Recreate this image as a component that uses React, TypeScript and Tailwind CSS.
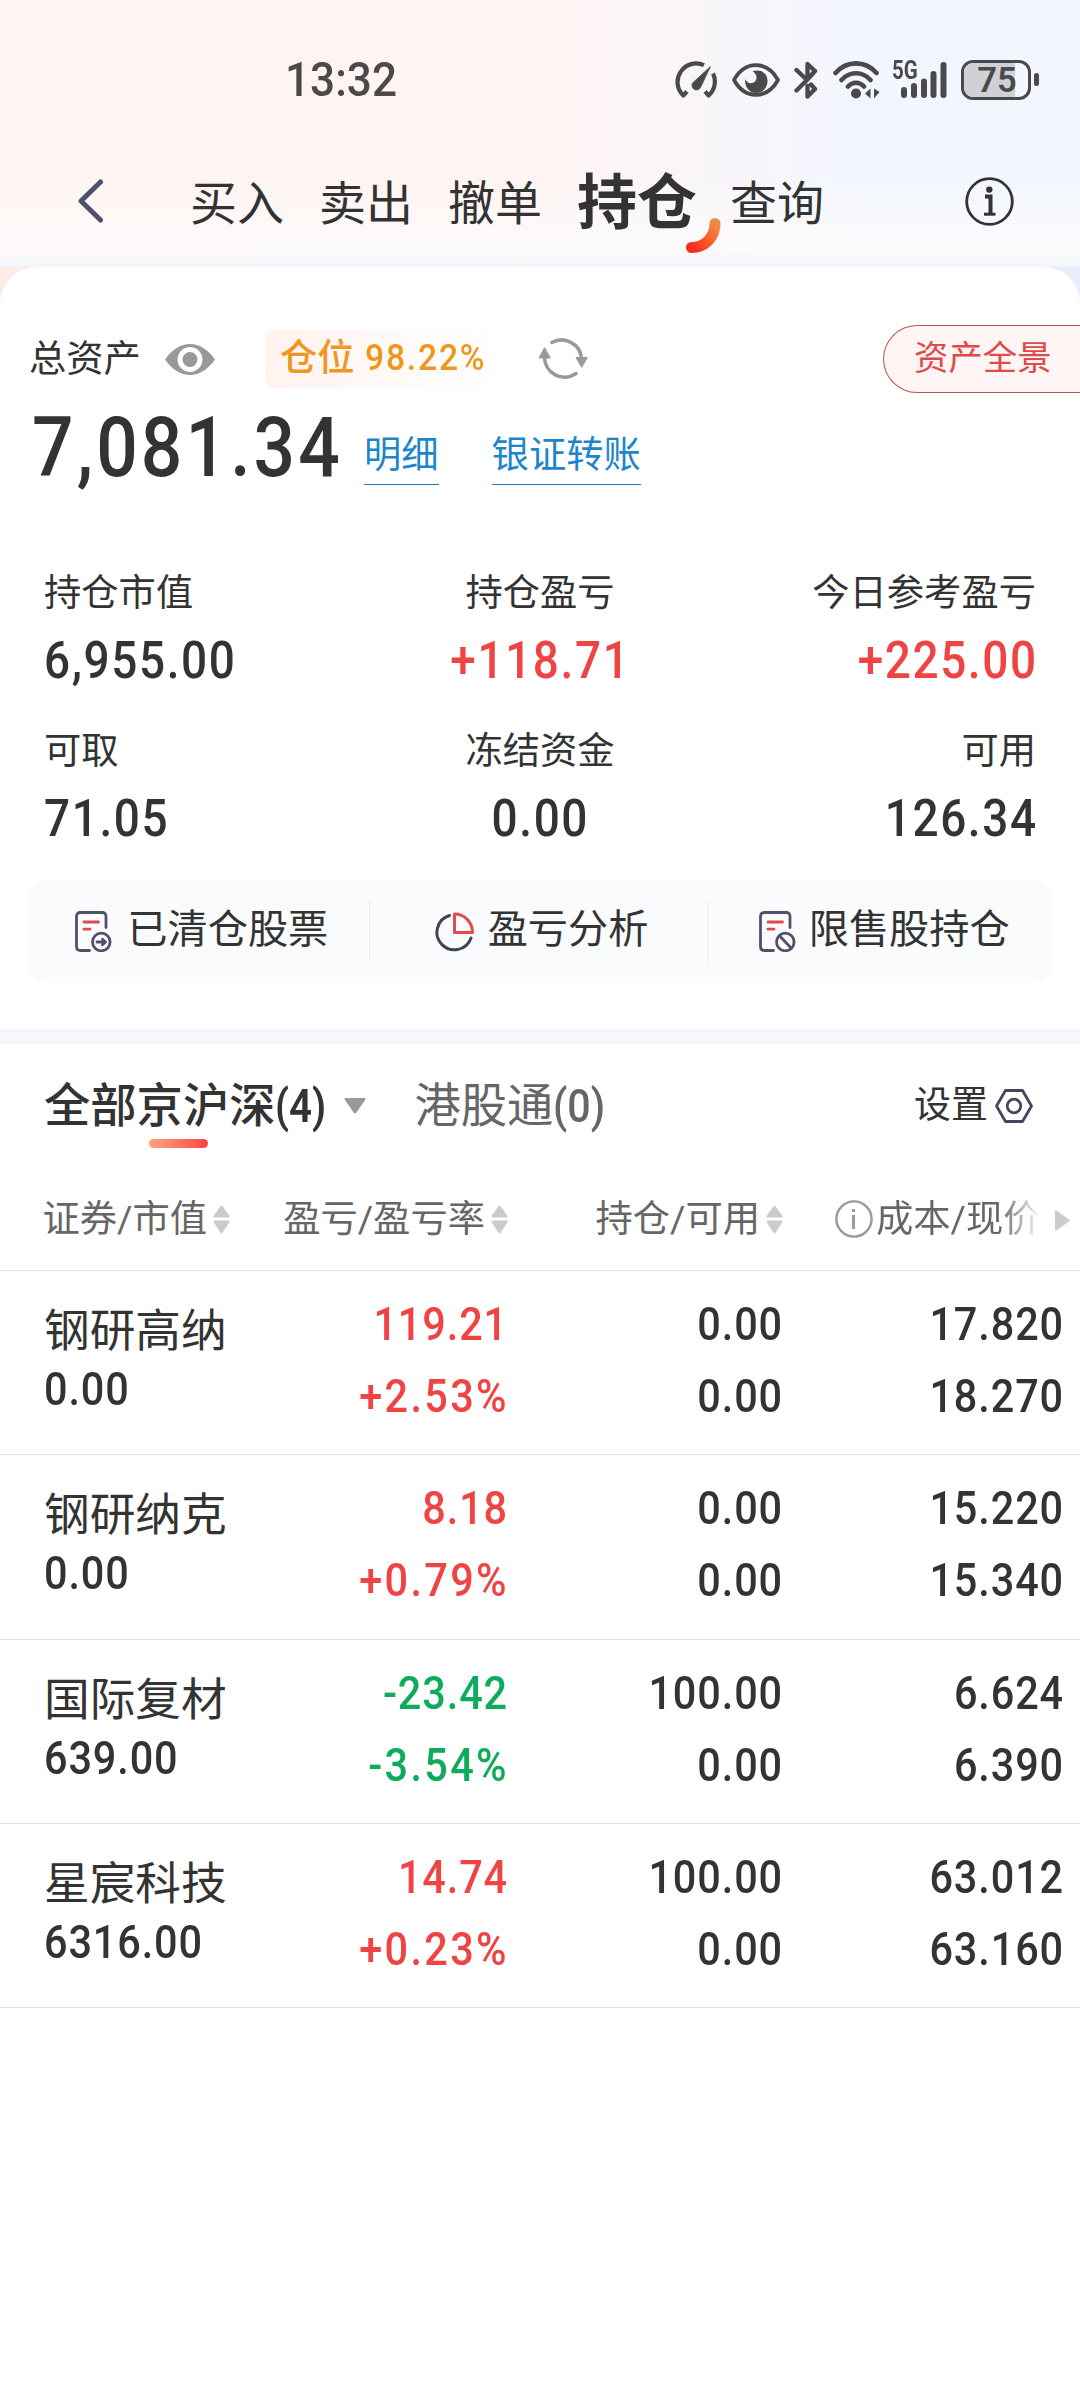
import React from "react";
import clsx from "clsx";

interface Stat {
  label: string;
  value: string;
  up?: boolean;
}

interface Holding {
  name: string;
  marketValue: string;
  profit: string;
  rate: string;
  amount: string;
  usable: string;
  cost: string;
  price: string;
}

const stats: Stat[] = [
  { label: "持仓市值", value: "6,955.00" },
  { label: "持仓盈亏", value: "+118.71", up: true },
  { label: "今日参考盈亏", value: "+225.00", up: true },
  { label: "可取", value: "71.05" },
  { label: "冻结资金", value: "0.00" },
  { label: "可用", value: "126.34" }
];

const holdings: Holding[] = [
  { name: "钢研高纳", marketValue: "0.00", profit: "119.21", rate: "+2.53%", amount: "0.00", usable: "0.00", cost: "17.820", price: "18.270" },
  { name: "钢研纳克", marketValue: "0.00", profit: "8.18", rate: "+0.79%", amount: "0.00", usable: "0.00", cost: "15.220", price: "15.340" },
  { name: "国际复材", marketValue: "639.00", profit: "-23.42", rate: "-3.54%", amount: "100.00", usable: "0.00", cost: "6.624", price: "6.390" },
  { name: "星宸科技", marketValue: "6316.00", profit: "14.74", rate: "+0.23%", amount: "100.00", usable: "0.00", cost: "63.012", price: "63.160" }
];

const StatusIcons = () => (
  <div className="flex items-center text-[#4a4a4a]">
    <svg className="w-[42px] h-[38px]" viewBox="0 0 42 38" fill="none" stroke="currentColor" strokeLinejoin="round">
      <path d="M29 4.200A18.600 18.600 0 0 0 8.300 34.500L12 30.500M38 12.500A18.600 18.600 0 0 1 33.700 34.500L30 30.500" strokeWidth="4.200" />
      <path d="M35.500 5.500L25.600 26.200A4.500 4.500 0 1 1 18.600 21Z" fill="currentColor" strokeWidth=".8" />
    </svg>
    <svg className="ml-[15px] w-[48px] h-[34px]" viewBox="0 0 48 34" fill="none">
      <path d="M2 17C7 8 15 2.200 24 2.200S41 8 46 17C41 26 33 31.800 24 31.800S7 26 2 17Z" stroke="currentColor" strokeWidth="3.800" strokeLinejoin="round" />
      <path d="M20.500 8.200C31 5.500 36 12 35.500 19C35 26 29.500 30 24 30C17 30 12.500 24 13.200 16C15 20.500 20 21.500 23 18.500C26 15 24.500 10.500 20.500 8.200Z" fill="currentColor" />
    </svg>
    <svg className="ml-[14px] w-[24px] h-[38px]" viewBox="0 0 24 38" fill="none" stroke="currentColor" strokeWidth="4.400" strokeLinecap="round" strokeLinejoin="round">
      <path d="M2.500 9L13 19L21 10L13.500 3V15M2.500 29.500L13 19M13.500 25V35.500L21 28L17 23.500" />
    </svg>
    <svg className="ml-[15px] w-[47px] h-[38px]" viewBox="0 0 47 38" fill="none" stroke="currentColor" strokeWidth="4.600" strokeLinecap="round">
      <path d="M2.500 12C14 -.8 32 -.8 43.500 12M8.500 19C16.500 10 29.500 10 37.500 19M15 25.500C19.500 20.500 26.500 20.500 31 25.500" />
      <circle cx="23" cy="32.500" r="5" fill="currentColor" stroke="none" />
      <path d="M32 32.500L37.500 27.500V37.500ZM46.500 31L41 27.500V37.500Z" fill="currentColor" stroke="none" />
    </svg>
    <div className="relative ml-[13px] w-[55px] h-[38px]">
      <span className="absolute left-[-1px] top-[-1px] text-[25px] leading-[22px] font-bold origin-left scale-x-[0.82]">5G</span>
      <svg className="w-[55px] h-[38px]" viewBox="0 0 55 38" stroke="currentColor" strokeWidth="6" strokeLinecap="round">
        <path d="M11 29V34M21 25V34M31 20.500V34M40.500 13V34M50.500 4V34" />
      </svg>
    </div>
    <div className="ml-[13px] flex items-center">
      <div className="relative w-[70px] h-[40px] rounded-[12px] border-[3px] border-[#4a4a4a] overflow-hidden">
        <div className="w-[51px] h-full bg-[#d0d1d7]" />
        <span className="absolute inset-0 pl-[2px] text-center text-[34.500px] leading-[35px] font-semibold">75</span>
      </div>
      <div className="ml-[3px] w-[5px] h-[13px] rounded-full bg-[#4a4a4a]" />
    </div>
  </div>
);

const SortIcon = () => (
  <svg className="w-[17px] h-[29px] shrink-0" viewBox="0 0 17 29" fill="#cbcbcb">
    <path d="M7.500 1.200Q8.500 0 9.500 1.200L16.500 11Q17 12.500 15.500 12.500H1.500Q0 12.500 .5 11ZM7.500 27.800Q8.500 29 9.500 27.800L16.500 17Q17 15.500 15.500 15.500H1.500Q0 15.500 .5 17Z" />
  </svg>
);

const DocIcon = ({ blocked }: { blocked?: boolean }) => (
  <svg className="w-[37px] h-[41px]" viewBox="0 0 37 41" fill="none" stroke="#50506b" strokeWidth="2.800" strokeLinecap="round" strokeLinejoin="round">
    <path d="M31 16.500V5.500Q31 1.500 27 1.500H5.500Q1.500 1.500 1.500 5.500V35.500Q1.500 39.500 5.500 39.500H14.500" />
    <path d="M9 11H23.500M9 18.200H15" stroke="#dc4a4a" />
    <circle cx="26.300" cy="31" r="8.800" />
    {blocked ? <path d="M20.500 24.800L32 37" /> : <path d="M22 31H30M27.500 28.200L30.500 31L27.500 33.800" />}
  </svg>
);

const PieIcon = () => (
  <svg className="w-[39px] h-[40px]" viewBox="0 0 39 40" fill="none" strokeWidth="3" strokeLinecap="round" strokeLinejoin="round">
    <path d="M14.500 3.500A17.500 17.500 0 1 0 36 26" stroke="#40435a" />
    <path d="M19.500 2V20.500H37.500A18 18.500 0 0 0 19.500 2Z" stroke="#e64b4b" />
  </svg>
);

const Header = () => (
  <header className="h-[267px] pt-[59px]">
    <div className="flex h-[41px] items-center justify-between pl-[285px] pr-[41px]">
      <span className="inline-block origin-left scale-x-[0.92] text-[48px] leading-[44px] font-medium text-[#4a4a4a]">13:32</span>
      <StatusIcons />
    </div>
    <div className="mt-[65px] flex h-[72px] items-center text-[47px] leading-[72px] text-[#333]">
      <svg className="ml-[77px] w-[27px] h-[44px]" viewBox="0 0 27 44" fill="none" stroke="#4e4e6e" strokeWidth="5" strokeLinecap="round" strokeLinejoin="round">
        <path d="M23.500 3L4 22L23.500 41" />
      </svg>
      <nav className="ml-[86px] mt-[6px] flex items-center gap-[35px]">
        <span>买入</span>
        <span>卖出</span>
        <span>撤单</span>
        <span className="relative text-[60px] font-bold">
          持仓
          <svg className="absolute left-[108px] top-[50px] w-[36px] h-[36px]" viewBox="0 0 36 36" fill="none">
            <defs>
              <linearGradient id="arc" x1="1" y1="0" x2="0" y2="1">
                <stop offset="0" stopColor="#f08c42" />
                <stop offset=".5" stopColor="#fb5c2c" />
                <stop offset="1" stopColor="#f82a20" />
              </linearGradient>
            </defs>
            <path d="M30 5.500C30 19 20 29.500 6.500 29.500" stroke="url(#arc)" strokeWidth="11" strokeLinecap="round" />
          </svg>
        </span>
        <span className="-ml-[2px]">查询</span>
      </nav>
      <svg className="ml-auto mr-[66px] w-[49px] h-[49px]" viewBox="0 0 49 49" fill="none" stroke="#333">
        <circle cx="24.500" cy="24.500" r="22.800" strokeWidth="2.800" />
        <circle cx="24.300" cy="12.600" r="3.200" fill="#333" stroke="none" />
        <path d="M20 19.500H25.500V37" strokeWidth="4" />
        <path d="M19 37.200H30.500" strokeWidth="3" />
      </svg>
    </div>
  </header>
);

const Summary = () => (
  <section className="h-[762px]">
    <div className="flex items-center pt-[58px] text-[37.300px] leading-[68px] text-[#333]">
      <span className="ml-[29px] -mt-[1px]">总资产</span>
      <svg className="ml-[24px] w-[50px] h-[31px]" viewBox="0 0 50 31">
        <path d="M0 15.500Q11 0 25 0T50 15.500Q39 31 25 31T0 15.500Z" fill="#999" />
        <circle cx="25" cy="15.500" r="10" fill="#999" stroke="#fff" strokeWidth="5" />
      </svg>
      <div className="ml-[50px] flex h-[58px] w-[230px] items-center rounded-lg bg-linear-to-r from-[#fff3ee] to-white pl-[15px] leading-[52px] whitespace-nowrap text-[#f0961e]">
        <span className="-mt-[3px] font-medium">仓位</span>
        <span className="-mt-[3px] ml-[11px] inline-block origin-left scale-x-[0.92] text-[36.500px] font-medium tracking-[2px]">98.22%</span>
      </div>
      <svg className="ml-[43px] -mt-[2px] w-[50px] h-[44px]" viewBox="0 0 50 44" fill="none" stroke="#999" strokeWidth="3.600" strokeLinecap="round">
        <path d="M14 6.500A20 20 0 0 1 43.500 22M38 37.500A20 20 0 0 1 6.500 21" />
        <path d="M43.500 31L38 21.500H49ZM6.500 12L1 22H12Z" fill="#999" stroke="#999" strokeWidth="1" strokeLinejoin="round" />
      </svg>
      <button className="ml-auto h-[68px] w-[197px] rounded-l-full border border-r-0 border-[#b85252] bg-[#fff5f4] pb-[2px] pl-[30px] text-left text-[34.400px] leading-[62px] text-[#e04a49]">
        资产全景
      </button>
    </div>
    <div className="flex h-[125px] pl-[32px]">
      <span className="inline-block w-[332px] origin-left scale-x-[0.87] text-[84px] leading-[109px] font-medium tracking-[3.600px] text-[#333]">7,081.34</span>
      <div className="flex items-start gap-[53px] pt-[33px] text-[37.300px] leading-[58px] text-[#1d86cb]">
        <span className="h-[59px] border-b border-[#1f78ac]">明细</span>
        <span className="h-[59px] border-b border-[#1f78ac]">银证转账</span>
      </div>
    </div>
    <div className="mb-[1px] grid grid-cols-3 px-[44px] pt-[45px] text-[#333]">
      {stats.map((s, i) => (
        <div key={s.label} className={clsx("h-[158px]", i % 3 === 1 && "text-center", i % 3 === 2 && "text-right")}>
          <div className="text-[37.300px] leading-[60px]">{s.label}</div>
          <div
            className={clsx(
              "mt-[8px] text-[51px] leading-[60px] font-medium tracking-[1.800px] scale-x-[0.9]",
              i % 3 === 0 && "origin-left",
              i % 3 === 2 && "origin-right -mr-[2px]",
              s.up && "text-[#f04343]"
            )}
          >
            {s.value}
          </div>
        </div>
      ))}
    </div>
    <div className="mx-[29px] flex h-[103px] items-center rounded-[17px] bg-[#fafbfd] text-[40.200px] leading-[60px] text-[#333]">
      <div className="flex h-[61px] flex-1 items-center justify-center gap-[15px] border-r border-[#ececf0] pl-[6px]">
        <DocIcon />
        <span className="-mt-[3px]">已清仓股票</span>
      </div>
      <div className="flex h-[61px] flex-1 items-center justify-center gap-[14px] border-r border-[#ececf0] pl-[5px]">
        <PieIcon />
        <span className="-mt-[3px]">盈亏分析</span>
      </div>
      <div className="flex h-[61px] flex-1 items-center justify-center gap-[13px] pl-[8px]">
        <DocIcon blocked />
        <span className="-mt-[3px]">限售股持仓</span>
      </div>
    </div>
  </section>
);

const Positions = () => (
  <section>
    <div className="relative flex h-[122px] items-center pt-[2px] pl-[44px] pr-[47px] text-[46.300px] leading-[60px]">
      <span className="font-medium text-[#333]">
        全部京沪深
        <span className="inline-block w-[51px] origin-left scale-x-[0.87] font-semibold">(4)</span>
      </span>
      <svg className="ml-[18px] w-[22px] h-[16px]" viewBox="0 0 22 16" fill="#999">
        <path d="M1.500 0H20.500Q22 0 21.300 1.800L12.200 14.800Q11 16 9.800 14.800L.7 1.800Q0 0 1.500 0Z" />
      </svg>
      <span className="ml-[48px] text-[#666]">
        港股通
        <span className="inline-block origin-left scale-x-[0.89] font-medium">(0)</span>
      </span>
      <span className="ml-auto text-[37px] text-[#333]">设置</span>
      <svg className="ml-[7px] w-[38px] h-[34px]" viewBox="0 0 38 34" fill="none" stroke="#45455c" strokeWidth="2.800" strokeLinejoin="round">
        <path d="M10.500 1.500H27.500L36.500 17L27.500 32.500H10.500L1.500 17Z" />
        <circle cx="19" cy="17" r="6.800" />
      </svg>
      <div className="absolute left-[149px] top-[95px] h-[9px] w-[59px] rounded-full bg-linear-to-r from-[#ffa27f] to-[#fb4040]" />
    </div>
    <div className="flex h-[105px] items-start border-b border-[#e0e0e0] pt-[24px] text-[37.300px] leading-[58px] text-[#666]">
      <div className="flex w-[230px] items-center justify-end gap-[6px]">
        证券/市值
        <SortIcon />
      </div>
      <div className="flex w-[278px] items-center justify-end gap-[6px]">
        盈亏/盈亏率
        <SortIcon />
      </div>
      <div className="flex w-[275px] items-center justify-end gap-[6px]">
        持仓/可用
        <SortIcon />
      </div>
      <div className="ml-[52px] flex w-[210px] items-center gap-[3px] whitespace-nowrap">
        <svg className="w-[38px] h-[38px] shrink-0" viewBox="0 0 38 38" fill="none" stroke="#999" strokeWidth="2.400">
          <circle cx="19" cy="19" r="17.600" />
          <path d="M18.500 15V29M18.500 9V12" strokeWidth="3" />
        </svg>
        <span className="bg-linear-to-r from-[#666] from-75% to-transparent to-100% bg-clip-text text-transparent">成本/现价</span>
      </div>
      <svg className="ml-[10px] mt-[20px] w-[15px] h-[21px]" viewBox="0 0 15 21" fill="#ccc">
        <path d="M0 1Q0 0 1.500 .5L14 9.500Q15 10.500 14 11.500L1.500 20.500Q0 21 0 20Z" />
      </svg>
    </div>
    {holdings.map((h) => {
      const color = h.profit.startsWith("-") ? "text-[#0fab5c]" : "text-[#f04343]";
      return (
        <div key={h.name} className="flex h-[184.300px] border-b border-[#e0e0e0] text-[46px] leading-[72px] text-[#333]">
          <div className="w-[230px] pl-[44px] pt-[25px]">
            <div className="text-[45.700px]">{h.name}</div>
            <div className="-mt-[15px] origin-left scale-x-[0.9] font-medium tracking-[1px]">{h.marketValue}</div>
          </div>
          <div className={clsx("w-[278px] origin-right scale-x-[0.9] pt-[17px] text-right font-medium", color)}>
            <div className="tracking-[1px]">{h.profit}</div>
            <div className="-mr-[1px] tracking-[2.600px]">{h.rate}</div>
          </div>
          <div className="w-[275px] origin-right scale-x-[0.9] pt-[17px] text-right font-medium tracking-[1px]">
            <div>{h.amount}</div>
            <div>{h.usable}</div>
          </div>
          <div className="w-[281px] origin-right scale-x-[0.9] pt-[17px] text-right font-medium tracking-[1px]">
            <div>{h.cost}</div>
            <div>{h.price}</div>
          </div>
        </div>
      );
    })}
  </section>
);

export default function App() {
  return (
    <div className="relative h-[2400px] w-[1080px] overflow-hidden bg-linear-to-r from-[#fdebe8] from-10% to-[#e9edfb] to-90% font-['Roboto','Noto_Sans_CJK_SC',sans-serif]">
      <div className="bg-linear-to-r from-[#fff4f2] from-48% to-[#f3f6ff] to-80%">
        <div className="bg-linear-to-b from-transparent from-65% via-[#fdfcfc]/80 via-92% to-[#f4f6fb] to-100%">
          <Header />
        </div>
      </div>
      <main className="h-[2133px] rounded-t-[36px] bg-white">
        <Summary />
        <div className="h-[15px] bg-[#f6f7fc]" />
        <Positions />
      </main>
    </div>
  );
}
